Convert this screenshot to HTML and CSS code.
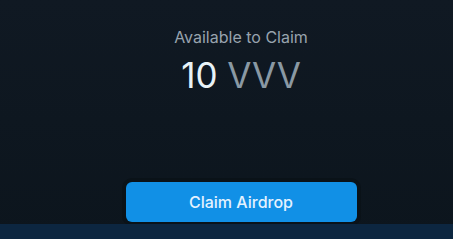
FILE: index.html
```html
<!DOCTYPE html>
<html>
<head>
<meta charset="utf-8">
<link rel="stylesheet" href="styles.css">
</head>
<body>
<div class="page">
  <div class="claim">
    <div class="label">Available to Claim</div>
    <div class="amount"><span class="num">10</span> <span class="unit">VVV</span></div>
  </div>
  <div class="actions">
    <button class="btn">Claim Airdrop</button>
  </div>
  <div class="footer"></div>
</div>
</body>
</html>
```
FILE: styles.css
```css
html, body {
  margin: 0;
  padding: 0;
}
body {
  width: 453px;
  height: 239px;
  overflow: hidden;
  font-family: Inter, "Noto Sans", sans-serif;
}
.page {
  height: 239px;
  display: flex;
  flex-direction: column;
  background: linear-gradient(180deg, #101923 0%, #0c151d 100%);
}
.claim {
  display: flex;
  flex-direction: column;
  align-items: center;
  padding-top: 27px;
  padding-left: 29px;
}
.label {
  font-size: 16px;
  line-height: 20px;
  color: #98a3ae;
}
.amount {
  margin-top: 8px;
  font-size: 35px;
  line-height: 40px;
  font-weight: 400;
}
.num {
  color: #e8f2f7;
}
.unit {
  color: #8a99a4;
}
.actions {
  flex: 1;
  display: flex;
  align-items: flex-end;
  justify-content: center;
  padding-left: 29px;
  padding-bottom: 2px;
}
.btn {
  width: 231px;
  height: 40px;
  border: none;
  border-radius: 6px;
  background: #1190e6;
  color: #e4f2ff;
  font-family: Inter, "Noto Sans", sans-serif;
  font-size: 16px;
  font-weight: 500;
  box-shadow: 0 0 0 4px #0a1218;
}
.footer {
  height: 15px;
  background: #0c2640;
}
```
